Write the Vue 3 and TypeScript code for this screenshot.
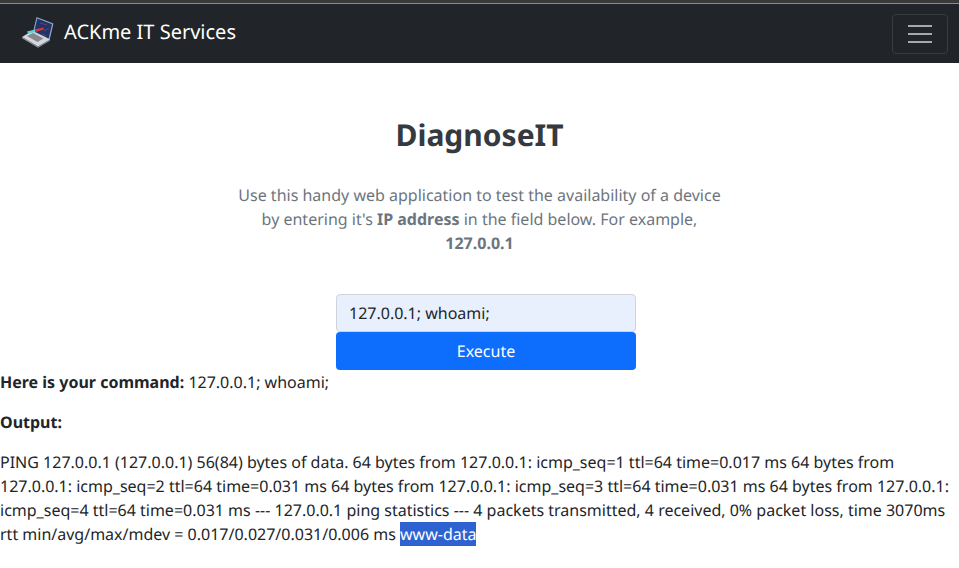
<script setup lang="ts">
const cmd = '127.0.0.1; whoami;'
</script>

<template>
  <div class="page">
    <div class="strip"></div>
    <nav class="navbar">
      <a class="brand">
        <svg class="logo" width="36" height="36" viewBox="20 16 36 36">
          <path d="M36.5 19 L53.5 25.5 L49.5 42.5 L33 34 Z" fill="#8fa3c8" />
          <path d="M37.3 20.6 L52 26.2 L48.6 40.6 L34.3 33.4 Z" fill="#1d3567" />
          <path d="M40 25 L47 27 M44 33 L49 30 M42 36 L46 38" stroke="#7a3a5a" stroke-width="1" fill="none" />
          <path d="M22 39 L32 33 L50 41.5 L38 48.5 Z" fill="#d5d7da" />
          <path d="M22 39 L38 48.5 L50 41.5 L50 42.8 L38 49.8 L22 40.2 Z" fill="#8d93a8" />
          <path d="M27 38 L33 35 L43.5 40.5 L37.5 44 Z" fill="#85888c" />
          <path d="M27 33.4 L35 31.5 L35.6 34 L28 35.6 Z" fill="#5fd0d8" />
          <path d="M35 31.2 L43.5 29.4 L44 31.4 L35.6 34 Z" fill="#d8343c" />
        </svg>
        <span>ACKme IT Services</span>
      </a>
      <button class="toggler" type="button" aria-label="Toggle navigation">
        <span></span><span></span><span></span>
      </button>
    </nav>
    <main>
      <section class="hero">
        <h1>DiagnoseIT</h1>
        <p class="lead">Use this handy web application to test the availability of a device by entering it's <b>IP address</b> in the field below. For example, <b>127.0.0.1</b></p>
      </section>
      <form class="form" @submit.prevent>
        <input class="field" :value="cmd" />
        <button class="exec" type="button">Execute</button>
      </form>
      <p class="row"><b>Here is your command:</b> {{ cmd }}</p>
      <p class="row"><b>Output:</b></p>
      <p class="row">PING 127.0.0.1 (127.0.0.1) 56(84) bytes of data. 64 bytes from 127.0.0.1: icmp_seq=1 ttl=64 time=0.017 ms 64 bytes from 127.0.0.1: icmp_seq=2 ttl=64 time=0.031 ms 64 bytes from 127.0.0.1: icmp_seq=3 ttl=64 time=0.031 ms 64 bytes from 127.0.0.1: icmp_seq=4 ttl=64 time=0.031 ms --- 127.0.0.1 ping statistics --- 4 packets transmitted, 4 received, 0% packet loss, time 3070ms rtt min/avg/max/mdev = 0.017/0.027/0.031/0.006 ms <span class="sel">www-data</span></p>
    </main>
  </div>
</template>

<style>
html, body { margin: 0; background: #fff; }
</style>

<style scoped>
.page {
  font-family: "Noto Sans", sans-serif;
  font-size: 16px;
  line-height: 24px;
  color: #212529;
  text-rendering: geometricPrecision;
}
.strip {
  height: 3px;
  background: #3a3a3b;
  border-bottom: 1px solid #8c8c8c;
}
.navbar {
  height: 59px;
  background: #212529;
  display: flex;
  align-items: center;
  justify-content: space-between;
  padding: 0 11px 0 20px;
}
.brand { display: flex; align-items: center; gap: 8px; color: #fff; font-size: 20px; margin-bottom: 4px; }
.logo { display: block; }
.toggler {
  width: 56px;
  height: 40px;
  background: transparent;
  border: 1px solid #383b3f;
  border-radius: 4px;
  padding: 0;
  display: flex;
  flex-direction: column;
  align-items: center;
  justify-content: center;
  gap: 6px;
}
.toggler span { width: 24px; height: 2px; background: #a6a8a9; }
.hero { width: 500px; margin: 0 auto; padding-top: 48px; text-align: center; }
h1 { margin: 0 0 24px; font-size: 30px; line-height: 48px; font-weight: 700; color: #343a40; }
.lead { margin: 0; color: #6c757d; }
.form { width: 300px; margin: 39px 0 0 336px; }
.field {
  display: block;
  box-sizing: border-box;
  width: 300px;
  height: 38px;
  padding: 6px 12px;
  border: 1px solid #ced4da;
  border-radius: 4px;
  background: #e8f0fe;
  font: 16px/24px "Noto Sans", sans-serif;
  color: #212529;
  text-rendering: geometricPrecision;
}
.exec {
  display: block;
  width: 300px;
  height: 38px;
  border: 0;
  border-radius: 4px;
  background: #0d6efd;
  color: #fff;
  font: 16px/24px "Noto Sans", sans-serif;
  text-rendering: geometricPrecision;
}
.row { margin: 0 0 16px; }
.sel { display: inline-block; background: #2e62d0; color: #fff; }
</style>
